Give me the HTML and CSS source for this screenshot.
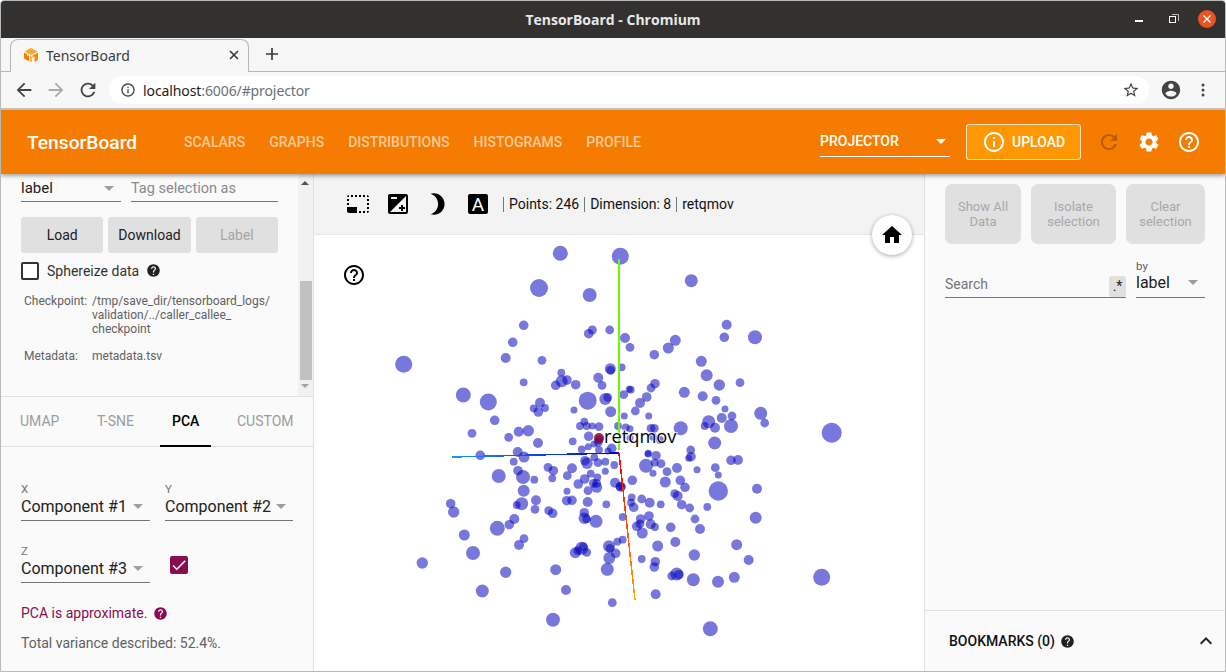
FILE: index.html
```html
<!DOCTYPE html>
<html lang="en">
<head>
<meta charset="utf-8">
<title>TensorBoard - Chromium</title>
<link rel="stylesheet" href="styles.css">
</head>
<body>
<div class="window">
  <div class="titlebar">
    <div class="title">TensorBoard - Chromium</div>
    <div class="winctl">
      <span class="min"></span>
      <svg class="max" width="10" height="10" viewBox="0 0 10 10"><path d="M3 0.5h6.5v6.5" fill="none" stroke="#bbb"/><rect x="0.5" y="2.5" width="6" height="6" fill="#333130" stroke="#fff"/></svg>
      <svg class="close" width="18" height="18" viewBox="0 0 18 18"><circle cx="9" cy="9" r="9" fill="#e95420"/><path d="M5.5 5.5l7 7m0-7l-7 7" stroke="#fff" stroke-width="1.3"/></svg>
    </div>
  </div>
  <div class="tabstrip">
    <div class="tab">
      <svg class="fav" width="16" height="16" viewBox="0 0 16 16"><path d="M8 1l6.5 3.5L8 8 1.5 4.5z" fill="#ffa726"/><path d="M1 5.5l3 1.7v2l2-1v6L1 11.5z" fill="#f57c00"/><path d="M15 5.5l-5.5 3v2l2-1v5.5l3.500-2z" fill="#fb8c00"/><path d="M7 8.5l2 1.2v4.800l-2 .7z" fill="#ffb74d"/></svg>
      <span class="tabtext">TensorBoard</span>
      <svg class="tabx" width="10" height="10" viewBox="0 0 10 10"><path d="M1 1l8 8m0-8l-8 8" stroke="#3c3c3c" stroke-width="1.7"/></svg>
    </div>
    <svg class="plus" width="12" height="12" viewBox="0 0 12 12"><path d="M6 0v12M0 6h12" stroke="#3c3c3c" stroke-width="1.7"/></svg>
  </div>
  <div class="toolbar">
    <svg class="navicon" width="22" height="22" viewBox="0 0 24 24"><path fill="#444" d="M20 11H7.83l5.59-5.59L12 4l-8 8 8 8 1.41-1.41L7.83 13H20v-2z"/></svg>
    <svg class="navicon" width="22" height="22" viewBox="0 0 24 24"><path fill="#aaa" d="M12 4l-1.41 1.41L16.17 11H4v2h12.17l-5.58 5.59L12 20l8-8z"/></svg>
    <svg class="navicon" width="22" height="22" viewBox="0 0 24 24"><path fill="#444" d="M17.65 6.35C16.2 4.9 14.21 4 12 4c-4.42 0-7.99 3.58-7.99 8s3.57 8 7.99 8c3.73 0 6.84-2.55 7.73-6h-2.08c-.82 2.33-3.04 4-5.65 4-3.31 0-6-2.69-6-6s2.69-6 6-6c1.66 0 3.14.69 4.22 1.78L13 11h7V4l-2.35 2.35z"/></svg>
    <div class="omnibox">
      <svg width="16" height="16" viewBox="0 0 24 24"><path fill="#444" d="M11 17h2v-6h-2v6zm1-15C6.48 2 2 6.48 2 12s4.48 10 10 10 10-4.48 10-10S17.52 2 12 2zm0 18c-4.41 0-8-3.59-8-8s3.59-8 8-8 8 3.59 8 8-3.59 8-8 8zM11 9h2V7h-2v2z"/></svg>
      <span class="url"><span class="host">localhost</span>:6006/#projector</span>
      <svg class="star" width="18" height="18" viewBox="0 0 24 24"><path fill="#444" d="M22 9.24l-7.19-.62L12 2 9.19 8.63 2 9.24l5.46 4.73L5.82 21 12 17.27 18.18 21l-1.63-7.03L22 9.24zM12 15.4l-3.76 2.27 1-4.28-3.32-2.88 4.38-.38L12 6.1l1.71 4.04 4.38.38-3.32 2.88 1 4.28L12 15.4z"/></svg>
    </div>
    <svg class="acct" width="22" height="22" viewBox="0 0 24 24"><path fill="#444" d="M12 2C6.48 2 2 6.48 2 12s4.48 10 10 10 10-4.48 10-10S17.52 2 12 2zm0 3c1.66 0 3 1.34 3 3s-1.34 3-3 3-3-1.34-3-3 1.34-3 3-3zm0 14.2c-2.5 0-4.71-1.28-6-3.22.03-1.99 4-3.08 6-3.08 1.99 0 5.97 1.09 6 3.08-1.29 1.94-3.5 3.22-6 3.22z"/></svg>
    <svg class="dots" width="4" height="14" viewBox="0 0 4 14"><circle cx="2" cy="2" r="1.5" fill="#444"/><circle cx="2" cy="7" r="1.5" fill="#444"/><circle cx="2" cy="12" r="1.5" fill="#444"/></svg>
  </div>

  <header class="tbheader">
    <div class="brand">TensorBoard</div>
    <nav class="tbnav">
      <span>SCALARS</span><span>GRAPHS</span><span>DISTRIBUTIONS</span><span>HISTOGRAMS</span><span>PROFILE</span>
    </nav>
    <div class="pluginselect"><span>PROJECTOR</span><i class="caret white"></i></div>
    <div class="upload">
      <svg width="24" height="24" viewBox="0 0 24 24"><path fill="#fff" d="M11 17h2v-6h-2v6zm1-15C6.48 2 2 6.48 2 12s4.48 10 10 10 10-4.48 10-10S17.52 2 12 2zm0 18c-4.41 0-8-3.59-8-8s3.59-8 8-8 8 3.59 8 8-3.59 8-8 8zM11 9h2V7h-2v2z"/></svg>
      <span>UPLOAD</span>
    </div>
    <svg class="hicon" width="24" height="24" viewBox="0 0 24 24"><path fill="#b85d00" d="M17.65 6.35C16.2 4.9 14.21 4 12 4c-4.42 0-7.99 3.58-7.99 8s3.57 8 7.99 8c3.73 0 6.84-2.55 7.73-6h-2.08c-.82 2.33-3.04 4-5.65 4-3.31 0-6-2.69-6-6s2.69-6 6-6c1.66 0 3.14.69 4.22 1.78L13 11h7V4l-2.35 2.35z"/></svg>
    <svg class="hicon" width="24" height="24" viewBox="0 0 24 24"><path fill="#fff" d="M19.14 12.94c.04-.3.06-.61.06-.94 0-.32-.02-.64-.07-.94l2.03-1.58c.18-.14.23-.41.12-.61l-1.92-3.32c-.12-.22-.37-.29-.59-.22l-2.39.96c-.5-.38-1.03-.7-1.62-.94l-.36-2.54c-.04-.24-.24-.41-.48-.41h-3.84c-.24 0-.43.17-.47.41l-.36 2.54c-.59.24-1.13.57-1.62.94l-2.39-.96c-.22-.08-.47 0-.59.22L2.74 8.87c-.12.21-.08.47.12.61l2.03 1.58c-.05.3-.09.63-.09.94s.02.64.07.94l-2.03 1.58c-.18.14-.23.41-.12.61l1.92 3.32c.12.22.37.29.59.22l2.39-.96c.5.38 1.03.7 1.62.94l.36 2.54c.05.24.24.41.48.41h3.84c.24 0 .44-.17.47-.41l.36-2.54c.59-.24 1.13-.56 1.62-.94l2.39.96c.22.08.47 0 .59-.22l1.92-3.32c.12-.22.07-.47-.12-.61l-2.01-1.58zM12 15.6c-1.98 0-3.6-1.62-3.6-3.6s1.62-3.6 3.6-3.6 3.6 1.62 3.6 3.6-1.62 3.6-3.6 3.6z"/></svg>
    <svg class="hicon" width="24" height="24" viewBox="0 0 24 24"><path fill="#fff" d="M11 18h2v-2h-2v2zm1-16C6.48 2 2 6.48 2 12s4.48 10 10 10 10-4.48 10-10S17.52 2 12 2zm0 18c-4.41 0-8-3.59-8-8s3.59-8 8-8 8 3.59 8 8-3.59 8-8 8zm0-14c-2.21 0-4 1.79-4 4h2c0-1.1.9-2 2-2s2 .9 2 2c0 2-3 1.75-3 5h2c0-2.25 3-2.5 3-5 0-2.21-1.79-4-4-4z"/></svg>
  </header>

  <main class="projector">
    <aside class="left">
      <div class="leftscroll">
        <div class="leftcontent">
          <div class="row labelrow">
            <div class="field w100"><span>label</span><i class="caret"></i></div>
            <div class="field tagfield"><span>Tag selection as</span></div>
          </div>
          <div class="row btnrow">
            <div class="btn">Load</div>
            <div class="btn">Download</div>
            <div class="btn off">Label</div>
          </div>
          <div class="row sphere">
            <span class="box"></span><span class="spheretext">Sphereize data</span>
            <svg width="15" height="15" viewBox="0 0 24 24"><path fill="#212121" d="M12 2C6.48 2 2 6.48 2 12s4.48 10 10 10 10-4.48 10-10S17.52 2 12 2zm1 17h-2v-2h2v2zm2.07-7.75l-.9.92C13.45 12.9 13 13.5 13 15h-2v-.5c0-1.1.45-2.1 1.17-2.83l1.24-1.26c.37-.36.59-.86.59-1.41 0-1.1-.9-2-2-2s-2 .9-2 2H8c0-2.21 1.79-4 4-4s4 1.79 4 4c0 .88-.36 1.68-.93 2.25z"/></svg>
          </div>
          <div class="meta">
            <span>Checkpoint:</span><span>/tmp/save_dir/tensorboard_logs/<br>validation/../caller_callee_<br>checkpoint</span>
            <span>Metadata:</span><span>metadata.tsv</span>
          </div>
        </div>
        <div class="scrollbar">
          <i class="arrow up"></i>
          <div class="thumb"></div>
          <i class="arrow down"></i>
        </div>
      </div>
      <div class="tabs">
        <span>UMAP</span><span>T-SNE</span><span class="active">PCA</span><span>CUSTOM</span>
      </div>
      <div class="pca">
        <div class="row comps">
          <div class="comp"><label>X</label><div class="field"><span>Component #1</span><i class="caret"></i></div></div>
          <div class="comp"><label>Y</label><div class="field"><span>Component #2</span><i class="caret"></i></div></div>
        </div>
        <div class="row comps third">
          <div class="comp"><label>Z</label><div class="field"><span>Component #3</span><i class="caret"></i></div></div>
          <span class="checked"><svg width="18" height="18" viewBox="0 0 24 24"><path fill="#fff" d="M9 16.17L4.83 12l-1.42 1.41L9 19 21 7l-1.41-1.41z"/></svg></span>
        </div>
        <div class="approx">PCA is approximate.
          <svg width="15" height="15" viewBox="0 0 24 24"><path fill="#880e4f" d="M12 2C6.48 2 2 6.48 2 12s4.48 10 10 10 10-4.48 10-10S17.52 2 12 2zm1 17h-2v-2h2v2zm2.07-7.75l-.9.92C13.45 12.9 13 13.5 13 15h-2v-.5c0-1.1.45-2.1 1.17-2.83l1.24-1.26c.37-.36.59-.86.59-1.41 0-1.1-.9-2-2-2s-2 .9-2 2H8c0-2.21 1.79-4 4-4s4 1.79 4 4c0 .88-.36 1.68-.93 2.25z"/></svg>
        </div>
        <div class="variance">Total variance described: 52.4%.</div>
      </div>
    </aside>

    <section class="center">
      <div class="ctoolbar">
        <svg class="t1" width="24" height="24" viewBox="0 0 24 24"><path d="M23 15h-2v2h2v-2zm0-4h-2v2h2v-2zm0 8h-2v2c1 0 2-1 2-2zM15 3h-2v2h2V3zm8 4h-2v2h2V7zm-2-4v2h2c0-1-1-2-2-2zM3 21h8v-6H1v4c0 1.1.9 2 2 2zM3 7H1v2h2V7zm12 12h-2v2h2v-2zm4-16h-2v2h2V3zm0 16h-2v2h2v-2zM3 3C2 3 1 4 1 5h2V3zm0 8H1v2h2v-2zm8-8H9v2h2V3zM7 3H5v2h2V3z"/></svg>
        <svg class="t2" width="24" height="24" viewBox="0 0 24 24"><path d="M15 17v2h2v-2h2v-2h-2v-2h-2v2h-2v2h2zm5-15H4c-1.1 0-2 .9-2 2v16c0 1.1.9 2 2 2h16c1.1 0 2-.9 2-2V4c0-1.1-.9-2-2-2zM5 5h6v2H5V5zm15 15H4L20 4v16z"/></svg>
        <svg class="t3" width="26" height="26" viewBox="0 0 24 24"><path d="M9 2c-1.05 0-2.05.16-3 .46 4.06 1.27 7 5.06 7 9.54 0 4.48-2.94 8.27-7 9.54.95.3 1.95.46 3 .46 5.52 0 10-4.48 10-10S14.52 2 9 2z"/></svg>
        <span class="aicon">A</span>
        <div class="stats"><span>Points: 246</span><span>Dimension: 8</span><span>retqmov</span></div>
      </div>
      <div class="canvas">
        <svg class="plot" width="610" height="437" viewBox="314 235 610 437">
          <defs>
            <linearGradient id="gb" gradientUnits="userSpaceOnUse" x1="452" y1="457" x2="619" y2="453"><stop offset="0" stop-color="#1e90ff"/><stop offset="1" stop-color="#0000cd"/></linearGradient>
            <linearGradient id="gr" gradientUnits="userSpaceOnUse" x1="619" y1="453" x2="635" y2="600"><stop offset="0" stop-color="#ff0000"/><stop offset="1" stop-color="#ffa500"/></linearGradient>
          </defs>
          <g class="pts">
<circle cx="560.3" cy="253.3" r="7.5"/><circle cx="620.3" cy="256.3" r="8.5"/><circle cx="539" cy="288" r="9"/><circle cx="589.7" cy="295" r="7"/><circle cx="523.7" cy="325.3" r="4.8"/><circle cx="512.7" cy="342.3" r="4.8"/><circle cx="505.7" cy="358" r="5"/><circle cx="542" cy="360.3" r="4.4"/><circle cx="403.7" cy="364.3" r="8.5"/><circle cx="588.7" cy="333.7" r="4.8"/><circle cx="592.3" cy="330" r="4.5"/><circle cx="609.7" cy="330" r="4.4"/><circle cx="625" cy="338" r="5"/><circle cx="630" cy="347.3" r="4.4"/><circle cx="610.3" cy="368.7" r="5.5"/><circle cx="610.7" cy="370.3" r="4.4"/><circle cx="621.7" cy="367.3" r="3.9"/><circle cx="561.3" cy="372.7" r="3.9"/><circle cx="567" cy="380" r="4.8"/><circle cx="561.7" cy="381.3" r="6"/><circle cx="555.7" cy="385.3" r="4.8"/><circle cx="575.7" cy="384.7" r="4.8"/><circle cx="523.7" cy="382.3" r="3.9"/><circle cx="598.3" cy="377.7" r="5"/><circle cx="602" cy="385.3" r="4.4"/><circle cx="463.3" cy="395" r="7.5"/><circle cx="488.3" cy="402" r="8.5"/><circle cx="587.7" cy="400.7" r="9"/><circle cx="605.3" cy="399" r="6"/><circle cx="607.7" cy="397.3" r="4.4"/><circle cx="623.7" cy="394.7" r="4.4"/><circle cx="629.3" cy="389.3" r="3.5"/><circle cx="610.7" cy="411.7" r="5.5"/><circle cx="624.3" cy="416" r="3.5"/><circle cx="574" cy="410" r="3.5"/><circle cx="540" cy="402.7" r="5"/><circle cx="533.7" cy="408.3" r="3.9"/><circle cx="545" cy="408" r="3.9"/><circle cx="538.3" cy="412" r="4.8"/><circle cx="494.7" cy="420.3" r="4.8"/><circle cx="472" cy="433.3" r="4.4"/><circle cx="508.7" cy="437.3" r="4.4"/><circle cx="518.7" cy="431.7" r="5"/><circle cx="528.3" cy="430.7" r="5.7"/><circle cx="538" cy="443" r="5"/><circle cx="517.7" cy="452" r="5"/><circle cx="584.3" cy="421.7" r="3.9"/><circle cx="580" cy="426" r="3.9"/><circle cx="586.7" cy="426" r="3.9"/><circle cx="592.3" cy="426" r="3.5"/><circle cx="599" cy="426.7" r="4.4"/><circle cx="618" cy="426" r="3.9"/><circle cx="625.7" cy="427.3" r="3.9"/><circle cx="588.7" cy="436.3" r="4.8"/><circle cx="572.7" cy="441.3" r="3.9"/><circle cx="599" cy="440" r="4.4"/><circle cx="598.3" cy="442.3" r="4.4"/><circle cx="594" cy="444" r="3.5"/><circle cx="588.3" cy="446.7" r="3.5"/><circle cx="581.7" cy="449.3" r="3.9"/><circle cx="599" cy="450" r="3.9"/><circle cx="611.7" cy="448.3" r="4.8"/><circle cx="608" cy="451" r="3.5"/>
<circle cx="691.3" cy="280.7" r="6.5"/><circle cx="726.7" cy="324.7" r="5"/><circle cx="724.3" cy="337.3" r="4.8"/><circle cx="755" cy="337.3" r="7"/><circle cx="675.3" cy="340.3" r="5.5"/><circle cx="668.3" cy="348" r="5.5"/><circle cx="654.3" cy="354.7" r="4.8"/><circle cx="701.3" cy="361.3" r="5.5"/><circle cx="706.7" cy="375.3" r="6"/><circle cx="719.3" cy="385" r="5.7"/><circle cx="740" cy="382.7" r="4.4"/><circle cx="655" cy="383.7" r="4.8"/><circle cx="651" cy="388" r="4.4"/><circle cx="630.7" cy="389.7" r="3.9"/><circle cx="684.3" cy="392.3" r="5.5"/><circle cx="702.7" cy="396.3" r="5"/><circle cx="716" cy="400.3" r="4.4"/><circle cx="646.7" cy="397" r="4.8"/><circle cx="640" cy="403" r="5"/><circle cx="635.3" cy="411" r="4.4"/><circle cx="648.7" cy="416" r="3.5"/><circle cx="725" cy="409" r="3.5"/><circle cx="721.7" cy="418" r="5"/><circle cx="732" cy="416" r="4.4"/><circle cx="731" cy="426" r="7"/><circle cx="760.7" cy="413.3" r="6.5"/><circle cx="764.7" cy="423" r="4.4"/><circle cx="708.7" cy="421.7" r="6.5"/><circle cx="715" cy="427.7" r="5"/><circle cx="704.7" cy="426" r="3.9"/><circle cx="680.7" cy="428.3" r="7"/><circle cx="651" cy="428.3" r="4.4"/><circle cx="654.3" cy="428.3" r="4.4"/><circle cx="630" cy="428.7" r="3.5"/><circle cx="831.7" cy="432.7" r="10"/><circle cx="714.7" cy="443" r="6.5"/><circle cx="653" cy="436.7" r="3.9"/><circle cx="660" cy="440" r="3.9"/><circle cx="630" cy="438" r="3.5"/><circle cx="648.3" cy="453.3" r="3.5"/>
<circle cx="690.7" cy="450" r="4.4"/><circle cx="691" cy="456.7" r="4.8"/><circle cx="688.7" cy="458.3" r="3.5"/><circle cx="656" cy="455.7" r="4.8"/><circle cx="648" cy="454" r="3.5"/><circle cx="654.7" cy="462.7" r="3.9"/><circle cx="661" cy="463.7" r="4.4"/><circle cx="646" cy="465.7" r="7"/><circle cx="614.3" cy="465" r="3.9"/><circle cx="653" cy="473.3" r="3.5"/><circle cx="667" cy="471.7" r="4.4"/><circle cx="677" cy="468" r="5"/><circle cx="697" cy="469.7" r="3.5"/><circle cx="715.3" cy="467.7" r="4.4"/><circle cx="718.3" cy="475" r="3.5"/><circle cx="731" cy="460.3" r="4.8"/><circle cx="738" cy="460" r="5"/><circle cx="632.3" cy="480.3" r="4.8"/><circle cx="665.3" cy="482" r="5.5"/><circle cx="680.3" cy="480.3" r="4.8"/><circle cx="685" cy="487.3" r="4.8"/><circle cx="718.3" cy="491" r="9.7"/><circle cx="757" cy="488.7" r="5"/><circle cx="615" cy="482.7" r="5"/><circle cx="620.7" cy="486.7" r="5"/><circle cx="620" cy="486.7" r="4.4"/><circle cx="622" cy="486.7" r="3.5"/><circle cx="674.7" cy="493.7" r="4.4"/><circle cx="677.7" cy="496" r="5"/><circle cx="631.7" cy="497.3" r="3.9"/><circle cx="631" cy="502.7" r="3.9"/><circle cx="633.7" cy="507.3" r="4.8"/><circle cx="641.7" cy="499" r="4.4"/><circle cx="649.7" cy="502.7" r="5"/><circle cx="660.7" cy="504.3" r="3.9"/><circle cx="681.7" cy="504.7" r="4.8"/><circle cx="689.7" cy="508" r="4.4"/><circle cx="707.3" cy="507" r="3.9"/><circle cx="695" cy="519" r="4.4"/><circle cx="755.7" cy="517.7" r="6"/><circle cx="700" cy="529" r="5"/><circle cx="670.7" cy="527.3" r="4.8"/><circle cx="622.7" cy="517" r="3.9"/><circle cx="649" cy="516" r="4.8"/><circle cx="640.7" cy="519" r="4.8"/><circle cx="640" cy="524" r="4.4"/><circle cx="636.7" cy="526.3" r="4.8"/><circle cx="650.7" cy="524.3" r="5"/><circle cx="655" cy="527" r="3.9"/><circle cx="642.3" cy="533" r="5.5"/><circle cx="657.7" cy="546" r="5.5"/><circle cx="675.3" cy="542" r="5"/><circle cx="694.3" cy="555" r="5.7"/><circle cx="736.7" cy="544.7" r="5.5"/><circle cx="748.7" cy="560" r="5"/><circle cx="641.7" cy="559" r="3.9"/><circle cx="655.3" cy="561.7" r="4.8"/><circle cx="654.3" cy="567" r="4.8"/><circle cx="676.7" cy="574" r="6.5"/><circle cx="671.7" cy="576" r="4.4"/><circle cx="679" cy="574.7" r="4.8"/><circle cx="693.3" cy="579.7" r="6.5"/><circle cx="718" cy="581.7" r="6"/><circle cx="734.3" cy="577.3" r="5.5"/><circle cx="821.7" cy="577.3" r="8.5"/><circle cx="655.7" cy="594.3" r="5"/><circle cx="612.3" cy="602.7" r="4.4"/><circle cx="710.3" cy="628.7" r="7.5"/>
<circle cx="480.3" cy="455.3" r="4.8"/><circle cx="524" cy="457" r="5.5"/><circle cx="513.7" cy="461.7" r="3.9"/><circle cx="498.7" cy="476" r="7"/><circle cx="518" cy="470.7" r="4.8"/><circle cx="523" cy="477" r="7"/><circle cx="534.3" cy="479.7" r="3.9"/><circle cx="548" cy="467.3" r="4.4"/><circle cx="553.3" cy="470.7" r="4.8"/><circle cx="552.3" cy="478.3" r="3.9"/><circle cx="567.3" cy="475.7" r="4.4"/><circle cx="572" cy="468.3" r="5"/><circle cx="585" cy="460.7" r="4.8"/><circle cx="587" cy="463.3" r="5.7"/><circle cx="594.3" cy="457.3" r="3.9"/><circle cx="598" cy="462.7" r="4.4"/><circle cx="605.3" cy="461.7" r="3.9"/><circle cx="605.3" cy="471.3" r="3.5"/><circle cx="590.7" cy="473.7" r="3.9"/><circle cx="584.7" cy="479" r="4.8"/><circle cx="578.3" cy="484" r="4.8"/><circle cx="596.7" cy="483.3" r="4.4"/><circle cx="593.3" cy="483.3" r="4.4"/><circle cx="596.7" cy="487.3" r="5.5"/><circle cx="597.3" cy="477.3" r="3.9"/><circle cx="588" cy="490.7" r="4.4"/><circle cx="567" cy="491.3" r="3.5"/><circle cx="523.7" cy="490.7" r="6"/><circle cx="536" cy="500.3" r="5"/><circle cx="535" cy="509.3" r="4.4"/><circle cx="521.7" cy="503.7" r="6.5"/><circle cx="516.7" cy="505" r="3.9"/><circle cx="450.7" cy="503.7" r="4.8"/><circle cx="453.7" cy="512" r="5.7"/><circle cx="566.7" cy="500.7" r="4.8"/><circle cx="572" cy="500.3" r="4.8"/><circle cx="587.7" cy="502" r="5"/><circle cx="606.3" cy="504.3" r="3.9"/><circle cx="548.7" cy="510.7" r="4.4"/><circle cx="552.7" cy="513.3" r="4.8"/><circle cx="584.3" cy="512.7" r="4.8"/><circle cx="584.3" cy="518.3" r="5.7"/><circle cx="586.7" cy="519" r="4.4"/><circle cx="596" cy="521.3" r="6.5"/><circle cx="514.3" cy="519" r="5"/><circle cx="509.3" cy="524.7" r="4.8"/><circle cx="497.3" cy="528.3" r="7.5"/><circle cx="464.3" cy="535" r="5.5"/><circle cx="524" cy="538.7" r="4.4"/><circle cx="519" cy="545" r="5"/><circle cx="473" cy="553" r="7"/><circle cx="581.7" cy="548.3" r="6.5"/><circle cx="583.3" cy="546.7" r="4.4"/><circle cx="575.3" cy="552.7" r="5.5"/><circle cx="586.7" cy="552.3" r="4.4"/><circle cx="577.7" cy="550.7" r="4.4"/><circle cx="609" cy="546.3" r="6"/><circle cx="610" cy="548.3" r="4.4"/><circle cx="617.3" cy="541.7" r="3.9"/><circle cx="622.7" cy="539.7" r="3.9"/><circle cx="615.7" cy="553.3" r="4.8"/><circle cx="609.3" cy="558" r="6"/><circle cx="607.3" cy="569.3" r="6.5"/><circle cx="422.3" cy="563" r="5.7"/><circle cx="505.7" cy="572.3" r="5.7"/><circle cx="555.7" cy="569.7" r="5.5"/><circle cx="482.3" cy="591" r="6.5"/><circle cx="566" cy="590" r="5"/><circle cx="553" cy="619.7" r="7"/>
          </g>
          <circle class="sel" cx="599" cy="438" r="5"/>
          <line class="axis" x1="619" y1="259" x2="619" y2="450" stroke="#66ff00"/>
          <line class="axis" x1="452" y1="457" x2="619" y2="453" stroke="url(#gb)"/>
          <line class="axis" x1="619" y1="453" x2="635" y2="600" stroke="url(#gr)"/>
          <text class="ptlabel" x="604" y="443">retqmov</text>
        </svg>
        <svg class="helpicon" width="24" height="24" viewBox="0 0 24 24"><path d="M11 18h2v-2h-2v2zm1-16C6.48 2 2 6.48 2 12s4.48 10 10 10 10-4.48 10-10S17.52 2 12 2zm0 18c-4.41 0-8-3.59-8-8s3.59-8 8-8 8 3.59 8 8-3.59 8-8 8zm0-14c-2.21 0-4 1.79-4 4h2c0-1.1.9-2 2-2s2 .9 2 2c0 2-3 1.75-3 5h2c0-2.25 3-2.5 3-5 0-2.21-1.79-4-4-4z"/></svg>
        <div class="homebtn"><svg width="24" height="24" viewBox="0 0 24 24"><path d="M10 20v-6h4v6h5v-8h3L12 3 2 12h3v8z"/></svg></div>
      </div>
    </section>

    <aside class="right">
      <div class="rbtns">
        <div class="rbtn b1">Show All<br>Data</div>
        <div class="rbtn b2">Isolate<br>selection</div>
        <div class="rbtn b3">Clear<br>selection</div>
      </div>
      <div class="searchrow">
        <div class="search"><span>Search</span><b class="regex">.*</b></div>
        <div class="by"><label>by</label><div class="field"><span>label</span><i class="caret"></i></div></div>
      </div>
      <div class="bookmarks">
        <span class="bmtext">BOOKMARKS (0)</span>
        <svg width="15" height="15" viewBox="0 0 24 24"><path fill="#212121" d="M12 2C6.48 2 2 6.48 2 12s4.48 10 10 10 10-4.48 10-10S17.52 2 12 2zm1 17h-2v-2h2v2zm2.07-7.75l-.9.92C13.45 12.9 13 13.5 13 15h-2v-.5c0-1.1.45-2.1 1.17-2.83l1.24-1.26c.37-.36.59-.86.59-1.41 0-1.1-.9-2-2-2s-2 .9-2 2H8c0-2.21 1.79-4 4-4s4 1.79 4 4c0 .88-.36 1.68-.93 2.25z"/></svg>
        <svg class="chev" width="24" height="24" viewBox="0 0 24 24"><path fill="#212121" d="M12 8l-6 6 1.41 1.41L12 10.83l4.59 4.58L18 14z"/></svg>
      </div>
    </aside>
  </main>
</div>
</body>
</html>
```
FILE: styles.css
```css
* { box-sizing: border-box; }
html, body { margin: 0; padding: 0; }
body { width: 1226px; height: 672px; overflow: hidden; font-family: Roboto, sans-serif; background: #fff; }
.window { width: 1226px; height: 672px; border: 1px solid #b9b9b9; border-radius: 4px 4px 0 0; display: flex; flex-direction: column; overflow: hidden; }

.titlebar { height: 37px; flex: none; background: #333130; display: flex; align-items: center; justify-content: center; position: relative; }
.title { color: #e8e8e8; font: 700 14px "Open Sans", sans-serif; }
.winctl { position: absolute; right: 9px; top: 9px; display: flex; align-items: center; }
.min { width: 8px; height: 2px; background: #fff; margin-top: 4px; margin-right: 26px; }
.max { margin-right: 19px; }
.close { display: block; }

.tabstrip { height: 34px; flex: none; background: #f6f6f6; border-bottom: 1px solid #b6b6b6; display: flex; align-items: flex-end; padding-left: 9px; }
.tab { width: 239px; height: 33px; background: #f7f7f7; border: 1px solid #b6b6b6; border-bottom: 0; border-radius: 8px 8px 0 0; display: flex; align-items: center; padding: 0 9px 2px 12px; color: #3c3c3c; margin-bottom: -1px; }
.fav { margin-right: 7px; }
.tabtext { font: 14px "Noto Sans", sans-serif; flex: 1; }
.plus { margin: 0 0 11px 17px; }

.toolbar { height: 38px; flex: none; background: #f7f7f7; border-bottom: 2px solid #c6c6c6; display: flex; align-items: center; padding-left: 12px; }
.navicon { margin-right: 10px; }
.omnibox { width: 1040px; height: 28px; background: #fff; border-radius: 14px; display: flex; align-items: center; padding-left: 11px; }
.url { font: 14px "Noto Sans", sans-serif; color: #66717a; margin-left: 7px; letter-spacing: -0.1px; }
.host { color: #1d1d1d; }
.star { margin-left: auto; margin-right: 9px; }
.acct { margin-left: 11px; }
.dots { margin-left: 19px; }

.tbheader { height: 64px; flex: none; background: #f57c00; display: flex; align-items: center; padding-left: 26px; position: relative; z-index: 5; box-shadow: 0 2px 4px rgba(0,0,0,.35); color: #fff; }
.brand { font-size: 19.2px; font-weight: 500; width: 157px; }
.tbnav { display: flex; gap: 24px; font-size: 14px; font-weight: 500; color: rgba(255,255,255,.6); width: 636px; }
.pluginselect { width: 130px; height: 28px; border-bottom: 1px solid #fff; display: flex; align-items: center; justify-content: space-between; font-size: 14px; font-weight: 500; margin-top: 1px; padding: 0 4px 2px 0; }
.caret { width: 0; height: 0; border-left: 5px solid transparent; border-right: 5px solid transparent; border-top: 5px solid #9e9e9e; display: block; flex: none; }
.caret.white { border-top-color: #fff; }
.upload { margin-left: 16px; width: 115px; height: 36px; background: #ff9800; border: 1px solid rgba(255,255,255,.75); border-radius: 3px; display: flex; align-items: center; gap: 6px; padding-left: 15px; font-size: 14px; font-weight: 500; margin-top: -1px; }
.hicon { margin-left: 16px; }

.projector { flex: 1; min-height: 0; display: flex; }
.left { width: 313px; flex: none; background: #fafafa; border-right: 1px solid #e0e0e0; display: flex; flex-direction: column; }
.leftscroll { height: 222px; flex: none; display: flex; overflow: hidden; }
.leftcontent { flex: 1; padding: 5px 20px 0 20px; }
.row { display: flex; }
.field { border-bottom: 1px solid #757575; display: flex; align-items: center; justify-content: space-between; }
.labelrow { gap: 10px; }
.labelrow .field { height: 23px; font-size: 15px; color: #212121; padding: 0 7px 4px 0; }
.w100 { width: 100px; }
.tagfield { flex: 1; }
.labelrow .tagfield { color: #8a8a8a; font-size: 14.5px; }
.btnrow { gap: 5px; margin-top: 15px; }
.btn { flex: 1; height: 36px; background: #e0e0e0; border-radius: 3px; display: flex; align-items: center; justify-content: center; font-size: 14px; color: #212121; }
.btn.off { color: #a6a6a6; }
.sphere { align-items: center; margin-top: 9px; font-size: 14px; color: #333; }
.box { width: 18px; height: 18px; border: 2px solid #333; border-radius: 2px; margin-right: 8px; background: #fff; }
.spheretext { margin-right: 7px; }
.sphere svg { margin-top: -1px; }
.meta { display: grid; grid-template-columns: 68px 1fr; row-gap: 13px; margin: 14px 0 0 3px; font-size: 12px; line-height: 14px; color: #616161; }

.scrollbar { width: 15px; flex: none; background: #f1f1f1; display: flex; flex-direction: column; align-items: center; padding: 0 1px 0 0; position: relative; }
.arrow { width: 0; height: 0; border-left: 4px solid transparent; border-right: 4px solid transparent; display: block; position: absolute; left: 3px; }
.arrow.up { top: 7px; border-bottom: 4px solid #505050; }
.arrow.down { bottom: 8px; border-top: 4px solid #a3a3a3; }
.thumb { width: 12px; height: 99px; background: #c1c1c1; margin: 107px 0 0 1px; }

.tabs { height: 51px; flex: none; border-top: 1px solid #e0e0e0; border-bottom: 1px solid #e0e0e0; display: flex; font-size: 14px; color: #9c9c9c; position: relative; }
.tabs span { position: absolute; top: 16px; }
.tabs span:nth-child(1) { left: 19px; }
.tabs span:nth-child(2) { left: 96px; }
.tabs span:nth-child(3) { left: 171px; }
.tabs span:nth-child(4) { left: 236px; }
.tabs .active { color: #000; font-weight: 500; }
.tabs .active::after { content: ""; position: absolute; left: -12px; width: 51px; top: 32px; height: 2px; background: #000; }

.pca { flex: 1; padding: 36px 20px 0; }
.comps { gap: 15px; }
.comp { width: 129px; }
.comp:last-child { width: 128px; }
.comp label { display: block; font-size: 11.5px; line-height: 12px; color: #757575; }
.comp .field { height: 26px; font-size: 16px; color: #212121; padding: 0 7px 3px 0; }
.third { margin-top: 24px; gap: 20px; }
.third .comp, .third .comp:last-child { width: 129px; }
.checked { width: 18px; height: 18px; background: #880e4f; border-radius: 2px; margin-top: 11px; display: block; }
.checked svg { display: block; }
.approx { margin-top: 22px; font-size: 14px; color: #880e4f; display: flex; align-items: center; gap: 6px; }
.variance { margin-top: 14px; font-size: 14px; color: #616161; }

.center { flex: 1; min-width: 0; display: flex; flex-direction: column; }
.ctoolbar { height: 61px; flex: none; background: #f3f3f3; border-bottom: 1px solid #e6e6e6; display: flex; align-items: center; padding: 0 0 0 32px; }
.ctoolbar svg { flex: none; }
.t1 { margin-right: 16px; }
.t2 { margin-right: 14px; }
.t3 { margin-right: 18px; }
.aicon { width: 20px; height: 20px; border-radius: 2px; background: #000; color: #fff; font-size: 19px; font-weight: 400; display: flex; align-items: center; justify-content: center; }
.stats { display: flex; font-size: 14px; color: #111; margin-left: 15px; }
.stats span { border-left: 1px solid #777; padding: 0 5px; line-height: 15px; }
.canvas { flex: 1; position: relative; background: #fff; }
.plot { position: absolute; left: 0; top: 0; display: block; }
.pts circle { fill: #0000bd; fill-opacity: .53; }
.sel { fill: #8a0030; fill-opacity: .85; }
.axis { stroke-width: 1.5; shape-rendering: crispEdges; }
.ptlabel { font: 18.3px "Open Sans", sans-serif; fill: #000; stroke: rgba(255,255,255,.7); stroke-width: 2px; paint-order: stroke; }
.helpicon { position: absolute; left: 28px; top: 28px; }
.homebtn { position: absolute; left: 558px; top: -20px; width: 40px; height: 40px; border-radius: 50%; background: #fff; box-shadow: 0 1px 4px rgba(0,0,0,.35); display: flex; align-items: center; justify-content: center; z-index: 3; }

.right { width: 301px; flex: none; background: #fafafa; border-left: 1px solid #e0e0e0; display: flex; flex-direction: column; }
.rbtns { display: flex; gap: 10px; padding: 10px 0 0 20px; }
.rbtn { height: 60px; background: #e0e0e0; border-radius: 7px; color: #a8a8a8; font-size: 13px; line-height: 15px; display: flex; align-items: center; justify-content: center; text-align: center; }
.b1 { width: 76px; }
.b2 { width: 85px; }
.b3 { width: 79px; }
.searchrow { display: flex; gap: 10px; padding: 16px 0 0 20px; height: 54px; align-items: flex-end; }
.search { width: 181px; height: 23px; border-bottom: 1px solid #757575; font-size: 14px; color: #757575; display: flex; align-items: center; justify-content: space-between; }
.search span { margin-bottom: 4px; }
.regex { width: 17px; height: 21px; background: #e0e0e0; border-radius: 3px; color: #212121; font-weight: 400; font-size: 14px; display: flex; align-items: center; justify-content: center; }
.by { width: 69px; }
.by label { display: block; font-size: 11.5px; line-height: 12px; color: #616161; }
.by .field { height: 26px; font-size: 16px; color: #212121; padding: 0 7px 4px 0; }
.bookmarks { margin-top: auto; height: 61px; border-top: 1px solid #e0e0e0; display: flex; align-items: center; padding: 0 7px 0 24px; font-size: 14px; font-weight: 500; color: #111; }
.bmtext { margin-right: 5px; }
.chev { margin-left: auto; }
```
